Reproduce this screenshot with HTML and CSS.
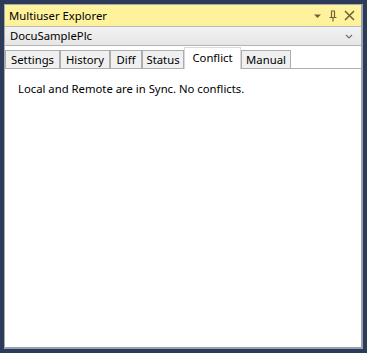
FILE: index.html
```html
<!DOCTYPE html>
<html>
<head>
<meta charset="utf-8">
<link rel="stylesheet" href="styles.css">
</head>
<body>
<div class="window">
  <div class="titlebar">
    <span class="title">Multiuser Explorer</span>
    <div class="tools">
      <svg class="ic" width="9" height="6" viewBox="0 0 9 6"><path d="M1 1.5h7l-3.5 3.5z" fill="#6d6436"/></svg>
      <svg class="ic" width="10" height="12" viewBox="0 0 10 12"><path d="M3 1h4M3.5 1v6M6.5 1v6M1.5 7.5h7M5 7.5v4" stroke="#6d6436" stroke-width="1.2" fill="none"/></svg>
      <svg class="ic" width="11" height="11" viewBox="0 0 11 11"><path d="M1 1l9 9M10 1l-9 9" stroke="#6d6436" stroke-width="1.6" fill="none"/></svg>
    </div>
  </div>
  <div class="combo">
    <span class="combo-text">DocuSamplePlc</span>
    <svg class="chev" width="8" height="5" viewBox="0 0 8 5"><path d="M1 1l3 3 3-3" stroke="#707070" stroke-width="1.2" fill="none"/></svg>
  </div>
  <div class="tabs">
    <div class="tab w-settings">Settings</div>
    <div class="tab w-history">History</div>
    <div class="tab w-diff">Diff</div>
    <div class="tab w-status">Status</div>
    <div class="tab active w-conflict">Conflict</div>
    <div class="tab w-manual">Manual</div>
    <div class="tab-fill"></div>
  </div>
  <div class="content">
    <p class="msg">Local and Remote are in Sync. No conflicts.</p>
  </div>
</div>
</body>
</html>
```
FILE: styles.css
```css
html, body {
  margin: 0;
  padding: 0;
  height: 100%;
}
body {
  background: #2c3b5a;
  font-family: "Noto Sans", "Open Sans", sans-serif;
  font-size: 11.3px;
  color: #000;
  padding: 4px 4px 4px 4px;
  box-sizing: border-box;
}
.window {
  height: 100%;
  box-sizing: border-box;
  border: 1px solid #a9a9a9;
  border-right-width: 2px;
  border-bottom-width: 2px;
  border-right-color: #9aa0ad;
  border-bottom-color: #9aa0ad;
  background: #fff;
  display: flex;
  flex-direction: column;
}
.titlebar {
  height: 21px;
  flex: none;
  background: #fff29d;
  display: flex;
  align-items: center;
  justify-content: space-between;
  padding: 0 6px 0 4px;
  border-bottom: 1px solid #b9b9b9;
}
.title {
  line-height: 21px;
}
.tools {
  display: flex;
  align-items: center;
  gap: 6px;
}
.ic { display: block; }
.combo {
  height: 18px;
  flex: none;
  background: linear-gradient(#f2f2f2, #e6e6e6);
  border-bottom: 1px solid #b4b4b4;
  display: flex;
  align-items: center;
  justify-content: space-between;
  padding: 0 8px 0 5px;
}
.combo-text { line-height: 18px; }
.chev { display: block; }
.tabs {
  display: flex;
  flex: none;
  align-items: flex-end;
  box-sizing: border-box;
  padding: 1px 0 0 0;
  height: 23px;
}
.tab {
  height: 19px;
  line-height: 17px;
  box-sizing: border-box;
  padding: 0;
  text-align: center;
  background: #f0f0f0;
  border: 1px solid #adadad;
  flex: none;
}
.w-settings { width: 55px; }
.w-history { width: 50px; }
.w-diff { width: 32px; }
.w-status { width: 42px; }
.w-conflict { width: 57px; }
.w-manual { width: 50px; }
.tab.active {
  height: 22px;
  background: #fff;
  border-color: #d9d9d9;
  border-bottom: none;
  line-height: 19px;
}
.tab-fill {
  flex: 1;
  border-bottom: 1px solid #adadad;
}
.content {
  flex: 1;
  padding: 12px 13px;
}
.msg {
  margin: 0;
}
```
